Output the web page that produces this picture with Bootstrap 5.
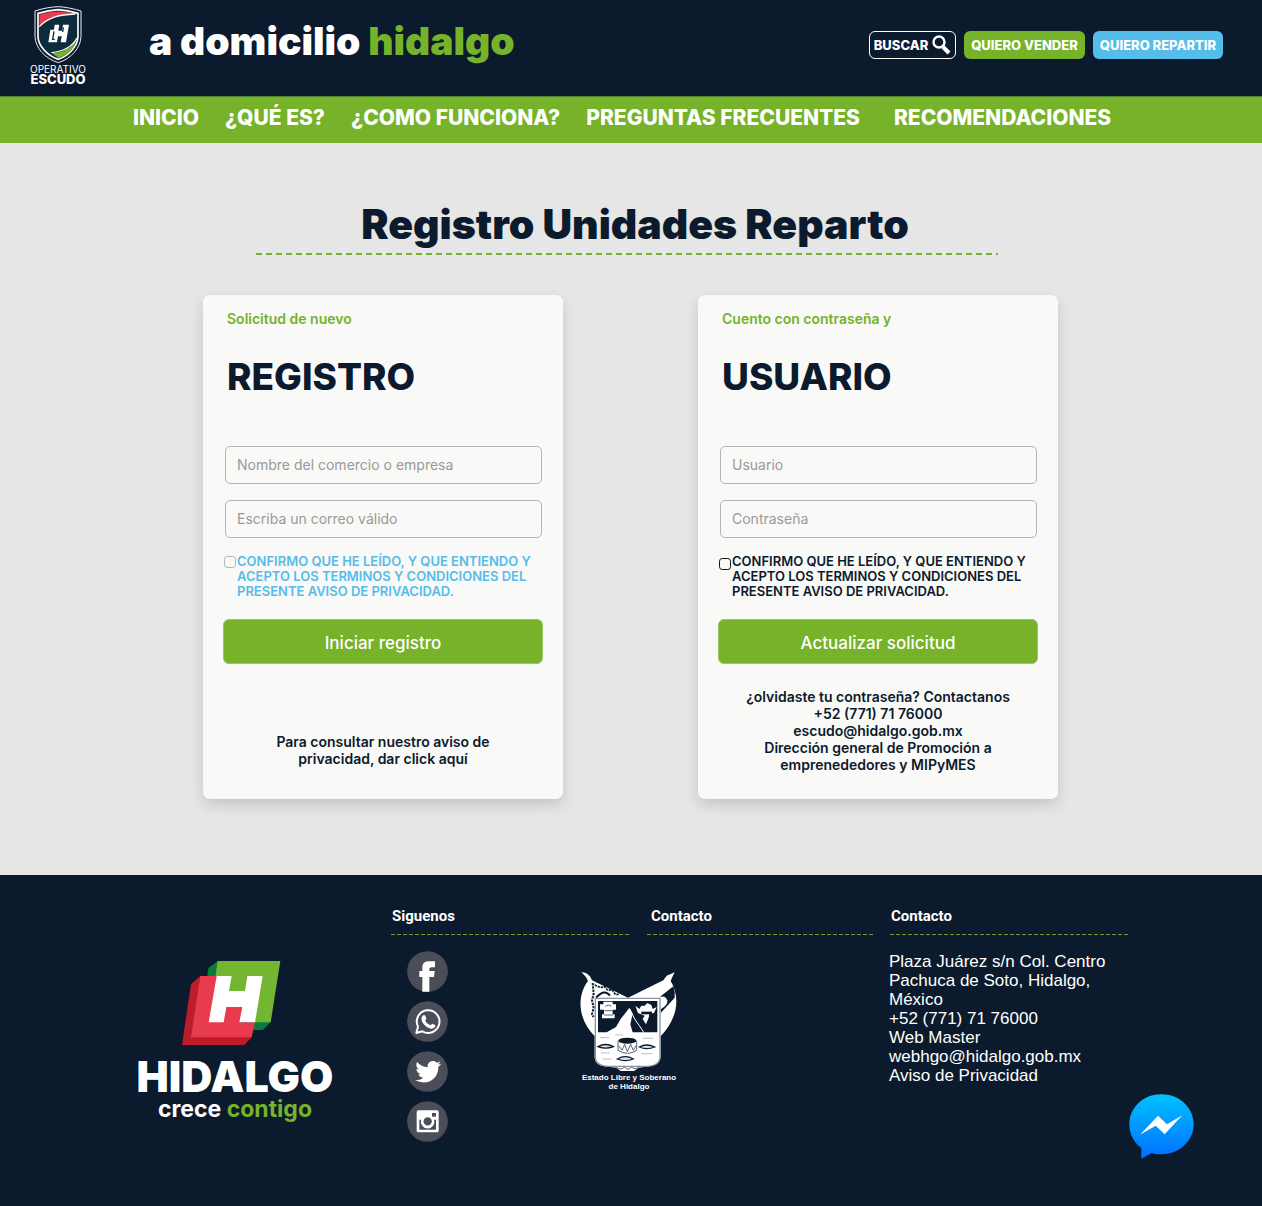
<!DOCTYPE html>
<html lang="es">
<head>
<meta charset="utf-8">
<meta name="viewport" content="width=device-width, initial-scale=1">
<title>A domicilio Hidalgo - Registro Unidades Reparto</title>
<link href="https://cdn.jsdelivr.net/npm/bootstrap@5.3.0/dist/css/bootstrap.min.css" rel="stylesheet">
<style>
:root{--navy:#0b1a2c;--green:#76b22a;--sky:#56bce9}
body{font-family:Inter,"Open Sans",sans-serif;background:var(--navy);color:var(--navy);min-height:100vh}
a{text-decoration:none}
.site-top{min-height:96px;padding:0 39px 0 30px}
.crest{width:56px;line-height:10px;font-size:10px;padding-top:6px}
.crest svg{width:48px;height:58px}
.crest strong{font-size:13px;font-weight:800}
.brand{font-size:39px;font-weight:900;line-height:40px;margin:21px 0 0 63px}
.txt-green{color:var(--green)}
.tools{padding-top:31px;gap:8px}
.tool-btn{font-size:13px;font-weight:800;line-height:16px;border-radius:6px;height:28px;padding:0;min-width:121px;color:#fff;white-space:nowrap}
.tool-btn:hover{color:#fff}
.tool-search{border:1px solid #fff;min-width:87px}
.bg-leaf{background:var(--green)}
.bg-sky{background:var(--sky);min-width:130px}
.main-nav{background:var(--green);border-top:1px solid #4e7f2a;min-height:47px}
.main-nav ul{width:996px;max-width:100%;gap:0 26px}
.main-nav a{color:#fff;font-size:21px;font-weight:800;line-height:42px;white-space:nowrap}
main{background:#e6e6e6;padding:56px 16px 76px}
.page-title{width:742px;max-width:100%}
.page-title h1{font-size:41px;font-weight:900;line-height:50px;margin:0}
.dash-lg{height:2px;background:repeating-linear-gradient(90deg,var(--green) 0 6px,transparent 6px 10px)}
.dash-sm{height:1px;background:repeating-linear-gradient(90deg,#6f9a3a 0 4px,transparent 4px 6px)}
.panels{gap:135px;padding:40px 1px 0 0}
.panel{width:360px;min-height:504px;background:#f9f9f7;border-radius:7px;box-shadow:0 6px 14px rgba(0,0,0,.14);padding:14px 20px 26px}
.panel .kicker{font-size:14px;font-weight:600;line-height:20px;margin:0 4px;color:var(--green)}
.panel h2{font-size:37px;font-weight:800;line-height:44px;margin:26px 4px 47px}
.panel .form-control{height:38px;margin:0 1px 16px 2px;width:auto;align-self:stretch;background:transparent;border:1px solid #b5b5b5;border-radius:5px;padding:0 11px 2px;font-size:14px;color:var(--navy)}
.panel .form-control::placeholder{color:#999}
.agree{font-size:13px;font-weight:600;line-height:15px;white-space:nowrap;margin-left:1px}
.agree input{width:12px;height:12px;margin:2px 1px 0 0;border-radius:3px;background-color:transparent;float:none;flex:none}
.agree-blue{color:var(--sky)}
.agree-blue input{border-color:#b5b5b5}
.agree-dark input{border-color:#111;margin-top:4px}
.btn-send{background:var(--green);border:1px solid #9cc46a;border-radius:6px;height:45px;margin-top:20px;color:#fff;font-size:17px;font-weight:500;padding:4px 0 0}
.help{font-size:14px;font-weight:600;line-height:17px;text-align:center;margin:auto 0 0}
.help-short{padding-bottom:6px}
footer{padding:30px 16px 64px;min-height:331px;color:#fff;position:relative}
.foot{width:994px;max-width:100%;margin:0 auto}
.foot-logo{width:202px;margin-right:55px;padding-top:55px}
.foot-logo svg{margin:0 9px 13px 0}
.foot-logo .word{font-size:43px;font-weight:900;line-height:34px}
.foot-logo .motto{font-size:23px;font-weight:700;line-height:32px}
.foot h3{font-family:Roboto,sans-serif;font-size:15px;font-weight:700;line-height:22px;margin:0 0 7px 1px}
.col-a{width:238px}.col-b{width:226px}
.foot-mid{margin-right:17px}
.foot-heads{gap:18px}
.social{gap:9px;margin-left:16px}
.social svg{width:41px;height:41px;display:block}
.state-arms{font-family:"Liberation Sans",sans-serif;font-size:8px;font-weight:700;line-height:9px;margin-left:132px;padding-top:20px}
.state-arms svg{width:98px;height:101px;margin-bottom:1px}
address{font-family:"Liberation Sans",sans-serif;font-size:17px;line-height:19px;margin:17px 0 0 -1px;white-space:nowrap}
address a{color:#fff}
.chat{position:absolute;right:68px;bottom:47px}
.chat svg{width:65px;height:65px;display:block}
</style>
</head>
<body>
<header class="site-top d-flex align-items-start text-white">
  <a href="#" class="crest d-flex flex-column align-items-center text-white">
    <svg viewBox="0 0 144 174" aria-hidden="true">
      <path d="M73 2C95 3 118 8 141 15V92C140 125 112 158 73 170C33 158 4 125 3 92V15C27 7 50 3 73 2Z" fill="#0b1a2c" stroke="#e8eef2" stroke-width="3"/>
      <path d="M73 11C93 12 113 16 132 22V92C131 119 106 149 73 160C39 149 13 119 12 92V22C32 16 52 12 73 11Z" fill="#0a2c3c" stroke="#fff" stroke-width="5"/>
      <path d="M16 26C52 15 94 13 122 24C78 24 44 32 16 62Z" fill="#e83c4e"/><path d="M16 62C44 32 78 26 124 24" fill="none" stroke="#fff" stroke-width="4"/>
      <path d="M128 98C114 126 90 138 54 142L74 156C102 145 124 124 128 98Z" fill="#76b22a"/><path d="M129 96C114 124 90 136 52 140" fill="none" stroke="#fff" stroke-width="4"/>
      <path d="M62 56H76L73 74H84L87 56H105L96 109H80L83 91H72L69 109H43L49 71H60Z" fill="#fff"/><path d="M60 76L56 100H62M88 64L86 78" fill="none" stroke="#0a2c3c" stroke-width="4"/>
    </svg>
    <span>OPERATIVO</span><strong>ESCUDO</strong>
  </a>
  <a href="#" class="brand text-white text-nowrap">a domicilio <span class="txt-green">hidalgo</span></a>
  <div class="tools d-flex ms-auto">
    <button type="button" class="btn tool-btn tool-search d-flex align-items-center justify-content-center">BUSCAR
      <svg class="ms-1" width="19" height="20" viewBox="0 0 19 20" fill="none" stroke="#fff" aria-hidden="true"><circle cx="7" cy="7" r="5.5" stroke-width="2.4"/><path d="M11 12L17 18" stroke-width="4"/></svg></button>
    <a href="#" class="btn tool-btn bg-leaf d-flex align-items-center justify-content-center">QUIERO VENDER</a>
    <a href="#" class="btn tool-btn bg-sky d-flex align-items-center justify-content-center">QUIERO REPARTIR</a>
  </div>
</header>
<nav class="main-nav" aria-label="Principal">
  <ul class="list-unstyled d-flex flex-wrap mx-auto mb-0">
    <li><a href="#">INICIO</a></li><li><a href="#">¿QUÉ ES?</a></li><li><a href="#">¿COMO FUNCIONA?</a></li><li><a href="#">PREGUNTAS FRECUENTES</a></li><li class="ms-2"><a href="#">RECOMENDACIONES</a></li>
  </ul>
</nav>
<main>
  <div class="d-flex justify-content-center pe-2">
    <div class="page-title text-center">
      <h1 class="ps-3">Registro Unidades Reparto</h1>
      <div class="dash-lg mt-1"></div>
    </div>
  </div>
  <div class="panels d-flex flex-wrap justify-content-center">
    <form class="panel d-flex flex-column">
      <p class="kicker">Solicitud de nuevo</p>
      <h2>REGISTRO</h2>
      <input class="form-control" type="text" aria-label="Nombre del comercio o empresa" placeholder="Nombre del comercio o empresa">
      <input class="form-control" type="email" aria-label="Correo" placeholder="Escriba un correo válido">
      <label class="agree agree-blue d-flex"><input class="form-check-input" type="checkbox"><span>CONFIRMO QUE HE LEÍDO, Y QUE ENTIENDO Y<br>ACEPTO LOS TERMINOS Y CONDICIONES DEL<br>PRESENTE AVISO DE PRIVACIDAD.</span></label>
      <button type="button" class="btn btn-send">Iniciar registro</button>
      <p class="help help-short">Para consultar nuestro aviso de<br>privacidad, dar click aquí</p>
    </form>
    <form class="panel d-flex flex-column">
      <p class="kicker">Cuento con contraseña y</p>
      <h2>USUARIO</h2>
      <input class="form-control" type="text" aria-label="Usuario" placeholder="Usuario">
      <input class="form-control" type="password" aria-label="Contraseña" placeholder="Contraseña">
      <label class="agree agree-dark d-flex"><input class="form-check-input" type="checkbox"><span>CONFIRMO QUE HE LEÍDO, Y QUE ENTIENDO Y<br>ACEPTO LOS TERMINOS Y CONDICIONES DEL<br>PRESENTE AVISO DE PRIVACIDAD.</span></label>
      <button type="button" class="btn btn-send">Actualizar solicitud</button>
      <p class="help">¿olvidaste tu contraseña? Contactanos<br>+52 (771) 71 76000<br>escudo@hidalgo.gob.mx<br>Dirección general de Promoción a<br>emprenededores y MIPyMES</p>
    </form>
  </div>
</main>
<footer>
  <div class="foot d-flex">
    <div class="foot-logo d-flex flex-column align-items-center text-nowrap">
      <svg width="100" height="86" viewBox="180 60 300 258" aria-hidden="true">
        <path d="M290 63L262 85L258 115H300ZM449 247L425 270H395L400 240Z" fill="#0b7a3e"/>
        <path d="M290 63H478L449 247H380L283 112Z" fill="#72b632"/>
        <path d="M238 108L210 132L183 315H370L392 292L300 280Z" fill="#bd1c2b"/>
        <path d="M238 108H290L280 195H370L360 247H402L392 292H210Z" fill="#e83c4e"/>
        <path d="M287 108H332L324 153H372L379 108H425L402 247H355L364 201H316L308 247H263Z" fill="#fff"/>
      </svg>
      <div class="word">HIDALGO</div>
      <div class="motto">crece <span class="txt-green">contigo</span></div>
    </div>
    <div class="foot-mid">
      <div class="foot-heads d-flex">
        <div class="col-a"><h3>Siguenos</h3><div class="dash-sm"></div></div>
        <div class="col-b"><h3 class="ms-1">Contacto</h3><div class="dash-sm"></div></div>
      </div>
      <div class="d-flex pt-3">
        <div class="social d-flex flex-column">
          <a href="#" aria-label="Facebook"><svg viewBox="0 0 123 123"><circle cx="61.500" cy="61.500" r="61" fill="#4b4e59"/><path d="M46 122V78H37V60H46V49C46 36 54 31 66 31H84V49H74C69 49 67 51 67 55V60H83L81 78H67V122Z" fill="#fff"/></svg></a>
          <a href="#" aria-label="WhatsApp"><svg viewBox="0 0 123 123"><circle cx="61.500" cy="61.500" r="61" fill="#4b4e59"/><path d="M28 96L33 77A34 34 0 1 1 46 91Z" fill="none" stroke="#fff" stroke-width="6" stroke-linejoin="round"/><path d="M47 44C50 41 54 42 55 45L58 52C58 55 54 57 55 59C58 65 63 69 69 72C72 73 74 67 77 68L84 72C86 74 84 80 79 82C70 86 57 79 50 69C43 60 41 50 47 44Z" fill="#fff"/></svg></a>
          <a href="#" aria-label="Twitter"><svg viewBox="0 0 123 123"><circle cx="61.500" cy="61.500" r="61" fill="#4b4e59"/><path d="M102 38C99 39 97 40 93 40C96 38 99 35 100 31C97 33 93 35 90 35C84 29 75 28 68 33C62 37 61 44 62 49C49 48 38 42 30 33C26 41 28 50 35 55C32 55 30 54 28 53C28 61 34 67 41 69C38 70 36 70 34 69C36 76 42 80 49 80C42 86 34 87 25 87C57 106 95 86 94 47C98 44 100 42 102 38Z" fill="#fff"/></svg></a>
          <a href="#" aria-label="Instagram"><svg viewBox="0 0 123 123"><circle cx="61.500" cy="61.500" r="61" fill="#4b4e59"/><path fill-rule="evenodd" d="M34 28H90Q95 28 95 33V89Q95 94 90 94H34Q29 94 29 89V33Q29 28 34 28ZM75 36V47H87V36ZM37 56V86H87V56H81A20 20 0 1 1 43 56Z" fill="#fff"/><circle cx="62" cy="61" r="16" fill="#4b4e59" stroke="#fff" stroke-width="7"/></svg></a>
        </div>
        <div class="state-arms d-flex flex-column align-items-center text-center">
          <svg viewBox="62 62 294 303" aria-hidden="true">
            <path d="M66 65L80 68L92 78L98 90L206 142L312 90L322 76L346 66L338 82L334 92C362 140 358 200 304 258V320Q300 345 270 348L238 352L224 362H184L170 352L135 348Q106 344 106 320V258C50 200 56 130 86 92L80 80Z" fill="#fff"/>
            <path d="M100 98L103 130L98 150L103 172L98 192L103 200" stroke="#0b1a2c" stroke-width="6" fill="none" stroke-dasharray="7 3"/>
            <path d="M106 104L124 112L134 108L146 120L158 118L168 132L180 132" stroke="#0b1a2c" stroke-width="5" fill="none" stroke-dasharray="7 3"/>
            <path d="M110 142Q136 114 152 136" fill="none" stroke="#0b1a2c" stroke-width="6"/>
            <path d="M342 108Q348 124 346 142L304 188V138Z" fill="#0b1a2c"/><path d="M302 142Q316 132 324 150Q326 166 302 178Z" fill="#fff"/>
            <path d="M108 144H302V320Q302 346 262 348H148Q108 346 108 320Z" fill="#fff" stroke="#8b93a0" stroke-width="4"/>
            <path d="M116 152H294V246H220L213 222L220 190L210 173L184 206L170 230L142 246H116Z" fill="#0b1a2c"/>
            <path d="M132 154H160V162H170V178H160V192H166V204H128V192H134V178H122V162H132Z" fill="#fff"/><path d="M138 168Q147 160 156 168M136 181H160M134 194H162" stroke="#0b1a2c" stroke-width="2" fill="none"/>
            <path d="M228 166L240 176L246 166H256L264 158L276 164L280 176L292 170L284 188L270 190L268 202L260 222L250 206L256 196L236 188Z" fill="#fff"/><path d="M246 184H278V192H246Z" fill="#0b1a2c"/>
            <path d="M211 175L226 206L240 226L253 246" fill="none" stroke="#fff" stroke-width="3"/>
            <ellipse cx="204" cy="271" rx="27" ry="9" fill="#0b1a2c"/><path d="M176 271V300Q204 318 232 300V271M178 286L188 300L196 282L204 304L214 282L222 300L230 286" fill="none" stroke="#59626f" stroke-width="3"/>
            <path d="M116 289Q139 276 162 289Q139 298 116 289ZM240 290Q262 278 286 290Q262 300 240 290ZM174 326Q198 312 222 326Q198 336 174 326Z" fill="#dfe3e6" stroke="#0b1a2c" stroke-width="4"/>
            <path d="M122 262H150M250 264H284M124 308H152M246 310H280M130 326H156M168 254H190" stroke="#9aa1aa" stroke-width="2"/>
            <path d="M168 350Q184 362 196 350Q206 364 216 350Q228 360 240 348" fill="none" stroke="#59626f" stroke-width="3"/>
          </svg>
          <span>Estado Libre y Soberano<br>de Hidalgo</span>
        </div>
      </div>
    </div>
    <div class="col-a">
      <h3>Contacto</h3><div class="dash-sm"></div>
      <address>Plaza Juárez s/n Col. Centro<br>Pachuca de Soto, Hidalgo,<br>México<br>+52 (771) 71 76000<br>Web Master<br>webhgo@hidalgo.gob.mx<br><a href="#">Aviso de Privacidad</a></address>
    </div>
  </div>
  <a href="#" class="chat" aria-label="Messenger"><svg viewBox="0 0 195 195"><defs><linearGradient id="msg" x1="0" y1="0" x2="0" y2="1"><stop offset="0" stop-color="#00c2ff"/><stop offset="1" stop-color="#006fff"/></linearGradient></defs><path d="M97 1C151 1 194 41 194 91C194 141 151 181 97 181C87 181 77 180 68 177L37 194V162C14 145 1 120 1 91C1 41 43 1 97 1Z" fill="url(#msg)"/><path d="M33 122L87 65L114 91L160 64L107 121L80 95Z" fill="#fff"/></svg></a>
</footer>
<script src="https://cdn.jsdelivr.net/npm/bootstrap@5.3.0/dist/js/bootstrap.bundle.min.js"></script>
</body>
</html>
